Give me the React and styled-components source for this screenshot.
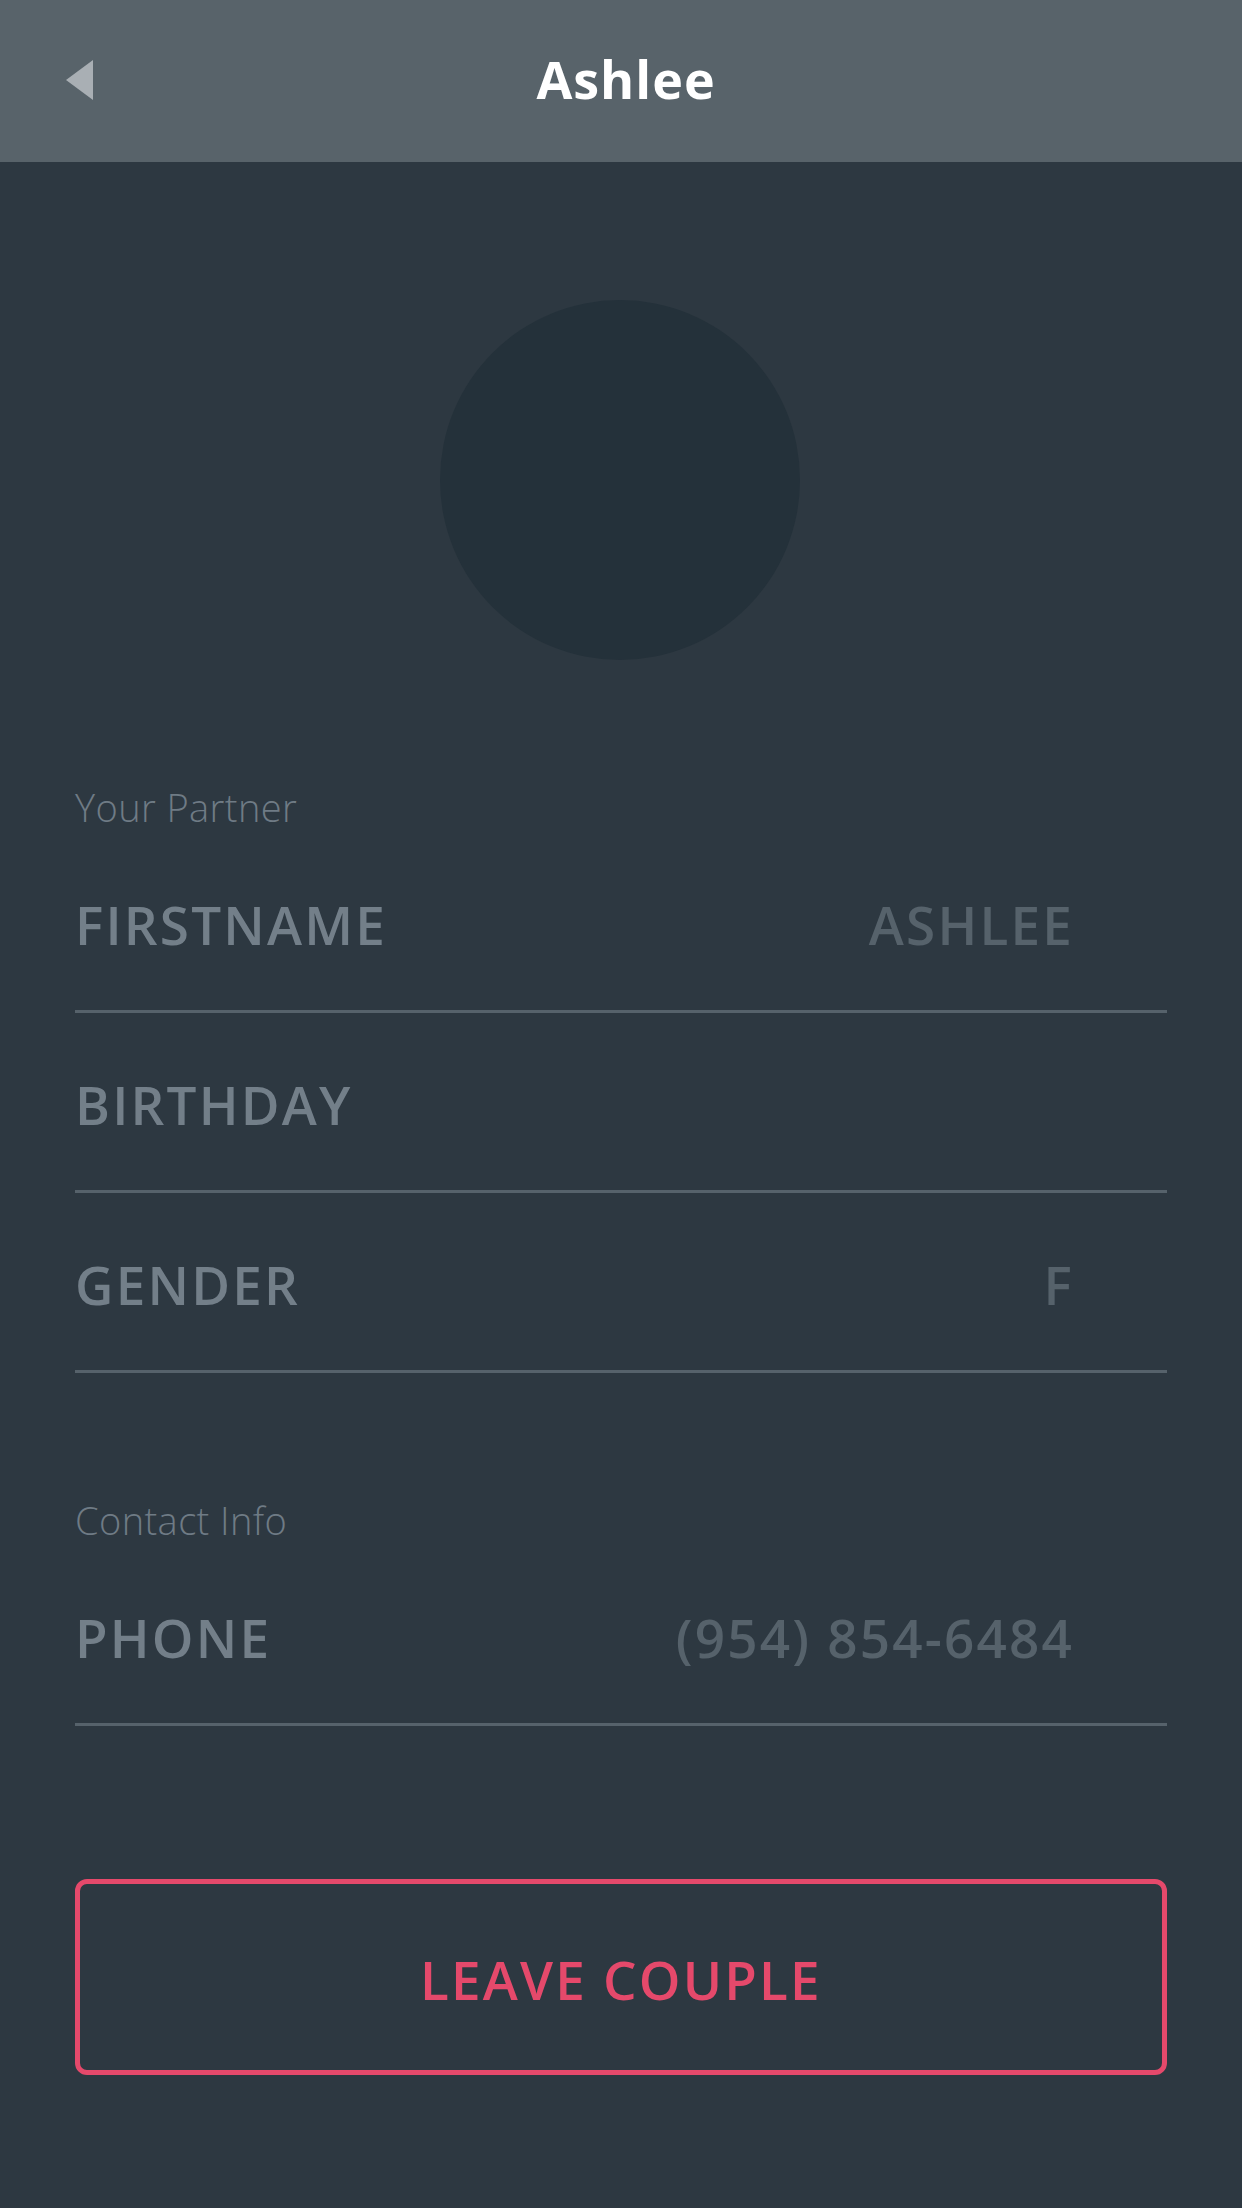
import React from "react"
import styled, { createGlobalStyle } from "styled-components"

const GlobalStyle = createGlobalStyle`
  html, body {
    margin: 0;
    padding: 0;
    background: #2d3841;
  }
  body {
    font-family: "Open Sans", "Liberation Sans", sans-serif;
  }
`

const partner = [
  { label: "FIRSTNAME", value: "ASHLEE" },
  { label: "BIRTHDAY", value: "" },
  { label: "GENDER", value: "F" }
]

const contact = [
  { label: "PHONE", value: "(954) 854-6484" }
]

const BackArrow = () => (
  <svg width="27" height="40" viewBox="0 0 27 40">
    <polygon points="27,0 27,40 0,20" fill="#a9afb4" />
  </svg>
)

const Section = ({ title, rows }) => (
  <SectionWrap>
    <SectionTitle>{title}</SectionTitle>
    {rows.map((row, index) => (
      <Row key={index}>
        <RowLabel>{row.label}</RowLabel>
        <RowValue>{row.value}</RowValue>
      </Row>
    ))}
  </SectionWrap>
)

const App = () => {
  return (
    <Page>
      <GlobalStyle />
      <Header>
        <BackButton>
          <BackArrow />
        </BackButton>
        <Title>Ashlee</Title>
      </Header>
      <Content>
        <Avatar />
        <Section title="Your Partner" rows={partner} />
        <Section title="Contact Info" rows={contact} />
        <LeaveButton>LEAVE COUPLE</LeaveButton>
      </Content>
    </Page>
  )
}

const Page = styled.div`
  width: 1242px;
  min-height: 2208px;
  background: #2d3841;
  display: flex;
  flex-direction: column;
`

const Header = styled.header`
  height: 162px;
  background: #58636a;
  display: flex;
  align-items: center;
  justify-content: center;
  position: relative;
`

const BackButton = styled.div`
  position: absolute;
  left: 66px;
  top: 60px;
  display: flex;
`

const Title = styled.h1`
  margin: 0 0 0 10px;
  color: #ffffff;
  font-size: 52px;
  font-weight: 700;
  letter-spacing: 1px;
  line-height: 1;
  padding-bottom: 4px;
`

const Content = styled.main`
  display: flex;
  flex-direction: column;
  padding: 138px 75px 136px;
`

const Avatar = styled.div`
  width: 360px;
  height: 360px;
  border-radius: 50%;
  background: #24313a;
  align-self: center;
  margin-left: -2px;
`

const SectionWrap = styled.section`
  display: flex;
  flex-direction: column;
  padding-top: 127px;
`

const SectionTitle = styled.div`
  color: #6f7b85;
  font-size: 38px;
  font-weight: 300;
  letter-spacing: 0.4px;
  line-height: 40px;
  height: 40px;
  margin-bottom: 6px;
`

const Row = styled.div`
  height: 180px;
  box-sizing: border-box;
  display: flex;
  align-items: center;
  justify-content: space-between;
  padding: 6px 93px 0 0;
  border-bottom: 3px solid #56626b;
  font-size: 53px;
  font-weight: 600;
  letter-spacing: 2.2px;
`

const RowLabel = styled.span`
  color: #737f89;
`

const RowValue = styled.span`
  color: #56626b;
`

const LeaveButton = styled.button`
  margin-top: 153px;
  height: 196px;
  width: 100%;
  background: transparent;
  border: 5px solid #e5496b;
  border-radius: 12px;
  color: #e5496b;
  font-family: "Open Sans", "Liberation Sans", sans-serif;
  font-size: 53px;
  font-weight: 600;
  letter-spacing: 2.2px;
  padding-top: 6px;
`

export default App
